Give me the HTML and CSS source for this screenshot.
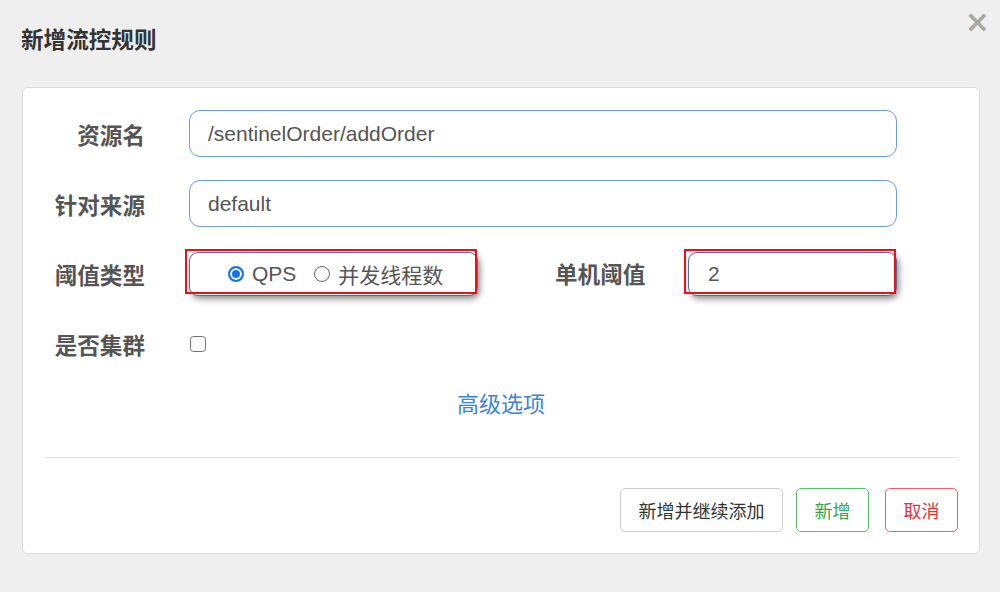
FILE: index.html
```html
<!DOCTYPE html>
<html lang="zh">
<head>
<meta charset="utf-8">
<title>新增流控规则</title>
<link rel="stylesheet" href="styles.css">
</head>
<body>
<div class="header">
  <h1 class="title">新增流控规则</h1>
  <span class="close">×</span>
</div>
<div class="card">
  <div class="form">
    <div class="lbl">资源名</div>
    <div class="field"><div class="input">/sentinelOrder/addOrder</div></div>

    <div class="lbl">针对来源</div>
    <div class="field"><div class="input">default</div></div>

    <div class="lbl">阈值类型</div>
    <div class="field row3">
      <div class="marked radio-wrap">
        <div class="control radios">
          <span class="radio checked"></span><span class="rtext">QPS</span>
          <span class="radio"></span><span class="rtext">并发线程数</span>
        </div>
        <div class="redbox"></div>
      </div>
      <div class="lbl lbl-inline">单机阈值</div>
      <div class="marked num-wrap">
        <div class="control num">2</div>
        <div class="redbox"></div>
      </div>
    </div>

    <div class="lbl">是否集群</div>
    <div class="field"><span class="checkbox"></span></div>
  </div>
  <div class="adv">高级选项</div>
  <div class="divider"></div>
  <div class="footer">
    <button class="btn btn-default">新增并继续添加</button>
    <button class="btn btn-green">新增</button>
    <button class="btn btn-red">取消</button>
  </div>
</div>
</body>
</html>
```

FILE: styles.css
```css
* { box-sizing: border-box; }
html, body {
  margin: 0;
  padding: 0;
  background: #efefef;
  font-family: "Liberation Sans", "Noto Sans CJK SC", sans-serif;
  color: #555;
}
.header {
  height: 87px;
  display: flex;
  justify-content: space-between;
  align-items: flex-start;
  padding: 0 10px 0 21px;
}
.title {
  margin: 25px 0 0 0;
  font-size: 22.6px;
  line-height: 28px;
  font-weight: bold;
  color: #333;
  font-family: "Noto Sans CJK SC", sans-serif;
}
.close {
  margin-top: 7px;
  font-size: 30px;
  line-height: 30px;
  font-weight: bold;
  color: #a8a8a8;
  font-family: "DejaVu Sans", sans-serif;
}
.card {
  margin: 0 20px 0 22px;
  background: #fff;
  border: 1px solid #dcdcdc;
  border-radius: 6px;
}
.form {
  display: grid;
  grid-template-columns: 101px 1fr;
  grid-auto-rows: 47px;
  column-gap: 44px;
  row-gap: 23px;
  padding: 22px 82px 0 21px;
  align-items: center;
}
.lbl {
  text-align: right;
  font-family: "Noto Sans CJK SC", sans-serif;
  font-weight: bold;
  font-size: 22.6px;
  line-height: 30px;
  color: #555;
  padding-top: 3px;
  white-space: nowrap;
}
.field { height: 47px; display: flex; align-items: center; }
.input {
  width: 100%;
  height: 47px;
  border: 1.5px solid #6b9fd6;
  border-radius: 11px;
  padding: 0 18px;
  display: flex;
  align-items: center;
  font-size: 21px;
  color: #555;
}
.row3 { align-items: flex-start; }
.marked { position: relative; height: 47px; }
.control {
  margin-top: 2px;
  height: 44px;
  border: 1.5px solid #4f6f95;
  border-radius: 9px;
  box-shadow: 2px 3px 6px rgba(0,0,0,0.45);
  display: flex;
  align-items: center;
  background: #fff;
}
.redbox {
  position: absolute;
  top: -1px;
  left: -4px;
  right: 1px;
  height: 45px;
  border: 2px solid #e8101a;
}
.radio-wrap { width: 289px; }
.radios { padding-left: 38px; font-size: 21px; color: #555; }
.radio {
  width: 16px;
  height: 16px;
  border-radius: 50%;
  border: 1.5px solid #666;
  display: inline-block;
  flex: none;
}
.radio.checked {
  border: 2px solid #1a73e8;
  background: #1a73e8;
  box-shadow: inset 0 0 0 2px #fff;
}
.rtext { margin-left: 8px; margin-right: 18px; font-family: "Liberation Sans", "Noto Sans CJK SC", sans-serif; }
.lbl-inline { margin-left: 77px; width: 90px; padding-top: 9px; text-align: left; }
.num-wrap { margin-left: 43px; flex: 1; }
.num { padding-left: 19px; font-size: 21px; color: #555; }
.checkbox {
  width: 16px;
  height: 16px;
  margin-left: 1px;
  border: 1.5px solid #707070;
  border-radius: 3.5px;
  display: inline-block;
}
.adv {
  margin-top: 20px;
  text-align: center;
  font-family: "Noto Sans CJK SC", sans-serif;
  font-size: 22px;
  line-height: 30px;
  color: #3b86d0;
}
.divider {
  margin: 40px 21px 0 22px;
  height: 1px;
  background: #e2e2e2;
}
.footer {
  display: flex;
  justify-content: flex-end;
  gap: 13px;
  padding: 30px 21px 21px;
}
.btn {
  height: 44px;
  padding: 0 17.5px;
  background: #fff;
  border-radius: 5px;
  font-family: "Noto Sans CJK SC", sans-serif;
  font-size: 18px;
  cursor: pointer;
}
.btn-default { border: 1.5px solid #ccc; color: #333; }
.btn-green { border: 1.5px solid #5cbf6a; color: #3aa64a; }
.btn-red { border: 1.5px solid #e66470; color: #d9363e; margin-left: 3px; }
```
